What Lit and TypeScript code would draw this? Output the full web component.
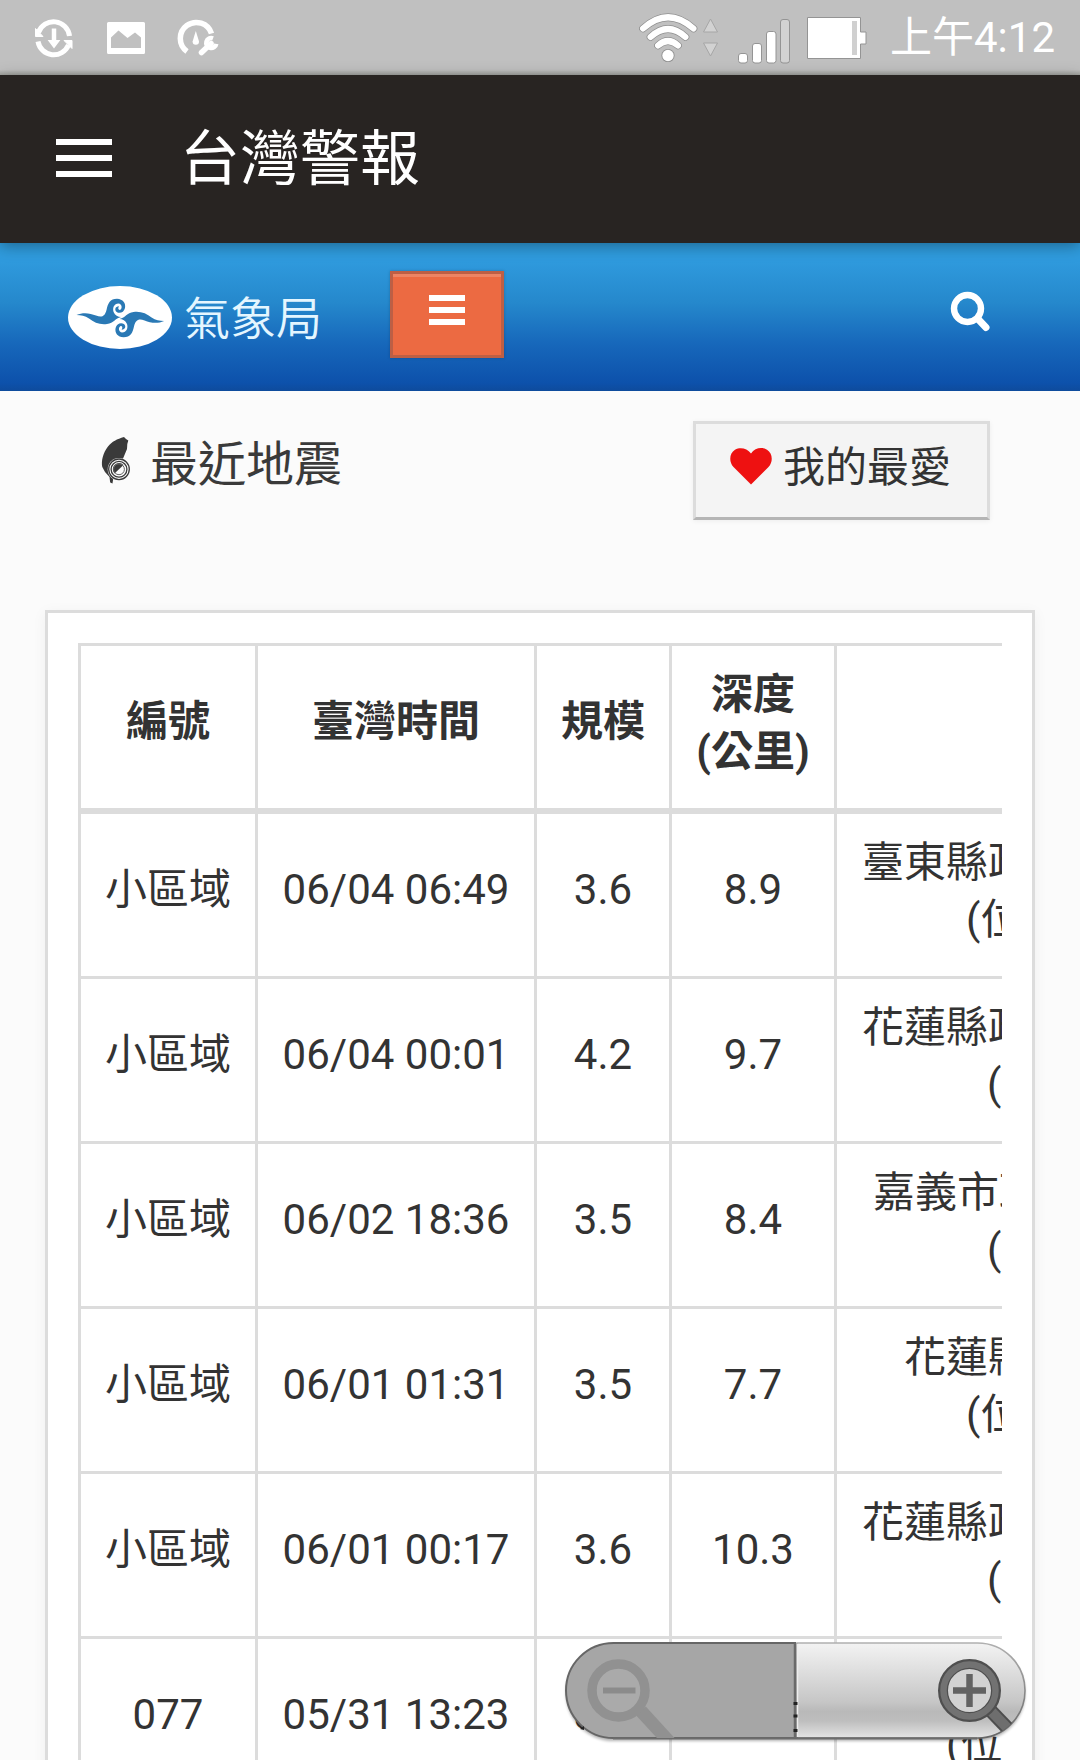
import { LitElement, html, css, svg } from "lit";
import { customElement, property } from "lit/decorators.js";

interface Quake {
  id: string;
  time: string;
  magnitude: string;
  depth: string;
  place: string;
  placeIndent: number;
  note: string;
  noteIndent: number;
}

const QUAKES: Quake[] = [
  { id: "小區域", time: "06/04 06:49", magnitude: "3.6", depth: "8.9", place: "臺東縣政", placeIndent: 25, note: "(位", noteIndent: 129 },
  { id: "小區域", time: "06/04 00:01", magnitude: "4.2", depth: "9.7", place: "花蓮縣政", placeIndent: 25, note: "(", noteIndent: 150 },
  { id: "小區域", time: "06/02 18:36", magnitude: "3.5", depth: "8.4", place: "嘉義市政", placeIndent: 36, note: "(", noteIndent: 150 },
  { id: "小區域", time: "06/01 01:31", magnitude: "3.5", depth: "7.7", place: "花蓮縣", placeIndent: 67, note: "(位", noteIndent: 129 },
  { id: "小區域", time: "06/01 00:17", magnitude: "3.6", depth: "10.3", place: "花蓮縣政", placeIndent: 25, note: "(", noteIndent: 150 },
  { id: "077", time: "05/31 13:23", magnitude: "3.6", depth: "19.3", place: "花蓮縣政", placeIndent: 25, note: "(位", noteIndent: 109 },
];

const fontStack = css`Roboto, "Noto Sans CJK TC", sans-serif`;

@customElement("status-bar")
export class StatusBar extends LitElement {
  static styles = css`
    :host {
      display: flex;
      height: 75px;
      background: linear-gradient(#c0c0c0 70px, #a3a5a0 75px);
      font-family: ${fontStack};
      color: #fff;
    }
    svg { display: block; flex: none; height: 75px; }
    .sync { width: 44px; margin-left: 32px; }
    .photo { width: 44px; margin-left: 28px; }
    .gauge { width: 46px; margin-left: 26px; }
    .signals { width: 236px; margin-left: auto; }
    .clock {
      margin: 8px 25px 0 18px;
      font-size: 42px;
      line-height: 60px;
      white-space: nowrap;
    }
  `;

  render() {
    return html`
      <svg class="sync" viewBox="32 0 44 75" fill="none" stroke="#fff" stroke-width="5">
        <path d="M38.5 32.5A16 16 0 0 1 69.500 36" />
        <path d="M38 41.500A16 16 0 0 0 68.500 45" />
        <path d="M35.500 28.500v8h7.500zM72 48.500v-8h-8z" fill="#fff" stroke-width="1" />
        <path d="M54 28.500V41" stroke-width="4.500" />
        <path d="M47.600 40h12.800L54 48.500z" fill="#fff" stroke="none" />
      </svg>
      <svg class="photo" viewBox="104 0 44 75">
        <path fill="#fff" fill-rule="evenodd" d="M108.500 22h35a1.500 1.500 0 0 1 1.500 1.500v29a1.500 1.500 0 0 1-1.500 1.500h-35a1.500 1.500 0 0 1-1.500-1.500v-29a1.500 1.500 0 0 1 1.500-1.500zM111 48h30V37.500l-6-5-7.500 5.500-9-7.500-7.500 7z" />
      </svg>
      <svg class="gauge" viewBox="174 0 46 75" fill="none" stroke="#fff">
        <path d="M187 51.500A16 16 0 1 1 211.500 33.500" stroke-width="5.500" />
        <path d="M195.800 31l3.200 10.500a3.200 3.200 0 1 1-6.400 0z" fill="#fff" stroke="none" />
        <path d="M201.500 52.500L211 43.500" stroke-width="5.500" stroke-linecap="round" />
        <path d="M213 38.300a5 5 0 1 0 3.200 5.500" stroke-width="4.600" />
      </svg>
      <svg class="signals" viewBox="636 0 236 75" fill="none">
        ${["#8f8f8f", "#fff"].map(
          (color, layer) => svg`
            <g stroke=${color} stroke-width=${layer ? 6 : 7.600} stroke-linecap="round">
              <path d="M643 28.500Q668 6 693.500 28.500" />
              <path d="M650.500 37Q668 21 685.500 37" />
              <path d="M658 45.500Q668 36.500 678 45.500" />
            </g>
            <circle cx="668" cy="55.500" r=${layer ? 5.700 : 6.600} fill=${color} />`
        )}
        <path d="M710.500 19l7 13h-14zM710.500 56l7-13h-14z" fill="#d2d2d2" stroke="#a6a6a6" stroke-width="1" stroke-linejoin="round" />
        <g fill="#fff" stroke="#949494" stroke-width="1">
          <rect x="738.500" y="53.500" width="9" height="9.500" rx="2.500" />
          <rect x="752.500" y="43.500" width="9" height="19.500" rx="2.500" />
          <rect x="766.500" y="31.500" width="9.500" height="31.500" rx="2.500" />
          <rect x="780.500" y="19.500" width="9" height="43.500" rx="2.500" fill="#d2d2d2" />
          <path d="M807.500 17.500h53v14.500h5.500v12h-5.500v14.500h-53z" />
          <path d="M852 21h5v34h-5z" fill="#d0d0d0" stroke="none" />
        </g>
      </svg>
      <span class="clock">上午4:12</span>
    `;
  }
}

@customElement("app-bar")
export class AppBar extends LitElement {
  static styles = css`
    :host {
      display: flex;
      align-items: center;
      height: 168px;
      padding-left: 56px;
      box-sizing: border-box;
      background: #282422;
      font-family: ${fontStack};
      color: #fff;
      box-shadow: 0 3px 14px rgba(0, 0, 0, 0.35);
      position: relative;
      z-index: 1;
    }
    .menu { display: grid; gap: 10px; width: 56px; margin-top: -3px; }
    .menu i { height: 6px; background: #fff; }
    .title { margin-left: 68px; font-size: 60px; line-height: 80px; margin-top: 2px; }
  `;

  render() {
    return html`
      <div class="menu"><i></i><i></i><i></i></div>
      <div class="title">台灣警報</div>
    `;
  }
}

@customElement("site-header")
export class SiteHeader extends LitElement {
  static styles = css`
    :host {
      display: flex;
      height: 148px;
      background: linear-gradient(#2f9ddd 0, #2f9add 18px, #2588cc 60px, #1768bb 100px, #0d51ab 140px, #0e4b9c 148px);
      font-family: ${fontStack};
    }
    .logo { width: 104px; height: 63px; margin: 43px 0 0 68px; flex: none; }
    .name {
      margin: 41px 0 0 12px;
      width: 141px;
      font-size: 46px;
      line-height: 70px;
      font-weight: 350;
      color: #e4f6ff;
      white-space: nowrap;
    }
    .nav {
      display: grid;
      gap: 6px;
      align-content: start;
      justify-content: center;
      grid-template-columns: 36px;
      box-sizing: border-box;
      width: 114px;
      height: 87px;
      margin: 28px 0 0 65px;
      padding-top: 21px;
      border: 3px solid #bd5f45;
      background: #ec6a42;
      box-shadow: inset 0 3px 0 #ee8463, 0 0 3px rgba(0, 0, 0, 0.2);
    }
    .nav i { height: 6px; background: #fff; }
    .search { width: 44px; height: 44px; margin: 46px 86px 0 auto; }
  `;

  render() {
    const wave = "M8.500 29C15 26 22 27 28 29.500C34 32 37 30 38.500 24C40 17 42 12.700 49 12.700C55 13 58 17 57 22C56 26.500 51.500 28 48.700 26C46.300 24 47 20.500 51 20.300C49.500 22.500 50.500 24.300 52.300 23.800C54.500 22.500 54 17.800 50.500 17.500C46 17.500 44.300 22 45.600 26C47 29.500 50 31 53 31C47 32.500 46 37 39 38C32 39 26 36.500 21 32.500C17 29.800 13 29 8.500 29Z";
    return html`
      <svg class="logo" viewBox="0 0 104 63">
        <ellipse cx="52" cy="31.500" rx="52" ry="31.500" fill="#fff" />
        <g fill="#2a79b5">
          <path d=${wave} />
          <path transform="rotate(180 52.300 32)" d=${wave} />
        </g>
      </svg>
      <div class="name">氣象局</div>
      <div class="nav"><i></i><i></i><i></i></div>
      <svg class="search" viewBox="0 0 44 44" fill="none" stroke="#fff">
        <circle cx="17.500" cy="19.500" r="13.500" stroke-width="6.400" />
        <path d="M28 30l8 8.500" stroke-width="7" stroke-linecap="round" />
      </svg>
    `;
  }
}

@customElement("page-heading")
export class PageHeading extends LitElement {
  static styles = css`
    :host {
      display: flex;
      align-items: flex-start;
      height: 219px;
      font-family: ${fontStack};
      color: #333;
    }
    .island { width: 32px; height: 50px; margin: 44px 0 0 100px; flex: none; }
    .title { margin: 38px 0 0 18px; font-size: 48px; line-height: 72px; color: #3a3a3a; }
    .fav {
      display: flex;
      align-items: flex-start;
      box-sizing: border-box;
      width: 297px;
      height: 99px;
      margin: 30px 90px 0 auto;
      border: 3px solid #dcdcdc;
      border-bottom-color: #b5b5b5;
      background: #f4f4f4;
      box-shadow: 0 1px 5px rgba(0, 0, 0, 0.06);
      font-size: 42px;
      line-height: 60px;
      white-space: nowrap;
    }
    .heart { width: 42px; height: 37px; margin: 24px 11px 0 34px; flex: none; }
    .label { margin-top: 14px; }
  `;

  render() {
    return html`
      <svg class="island" viewBox="0 0 32 50">
        <path fill="#3a3a3a" d="M24 2L26 4L28.300 5.500L27.300 9L27 14L22 26L14 38L12.500 48.500L10.200 47.500L9.500 42L5 37L2.300 32C1 26 3 18 8 11.500C12 6.500 17 4 24 2Z" />
        <circle cx="19" cy="34.300" r="11.300" fill="#fbfbfb" />
        <path fill="#3a3a3a" d="M23.500 30A6 6 0 0 0 14.500 38.500Z" />
        <g fill="none">
          <circle cx="19" cy="34.300" r="10.300" stroke="#3a3a3a" stroke-width="1.300" />
          <circle cx="19" cy="34.300" r="7.900" stroke="#3a3a3a" stroke-width="1.300" />
          <circle cx="19" cy="34.300" r="5.400" stroke="#666" stroke-width="1" />
        </g>
      </svg>
      <div class="title">最近地震</div>
      <div class="fav">
        <svg class="heart" viewBox="0 0 42 37">
          <path fill="#ee1111" d="M21 36.500L3.500 19C-1.500 13.500-.5 5 5 1.700C10.500-1.300 17 .3 21 5.500C25-.3 32-1.300 37 1.700C42.500 5 43.500 13.500 38.500 19Z" />
        </svg>
        <span class="label">我的最愛</span>
      </div>
    `;
  }
}

@customElement("quake-table")
export class QuakeTable extends LitElement {
  @property({ attribute: false }) rows: Quake[] = [];

  static styles = css`
    :host {
      display: block;
      width: 990px;
      height: 1300px;
      margin-left: 45px;
      box-sizing: border-box;
      padding: 30px 30px 0;
      border: 3px solid #dcdcdc;
      background: #fff;
      box-shadow: 0 3px 14px rgba(0, 0, 0, 0.05);
      font-family: ${fontStack};
      font-size: 42px;
      line-height: 57.500px;
      color: #333;
    }
    .grid { overflow: hidden; border-top: 3px solid #dcdcdc; }
    .row {
      display: grid;
      grid-template-columns: 177px 279px 135px 165px 400px;
      height: 162px;
      border-bottom: 3px solid #dcdcdc;
    }
    .head { font-weight: 700; border-bottom-width: 6px; }
    .cell {
      display: flex;
      flex-direction: column;
      align-items: center;
      justify-content: center;
      padding-bottom: 11px;
      border-left: 3px solid #dcdcdc;
      white-space: nowrap;
    }
    .pair { padding-bottom: 8px; }
    .place { align-items: flex-start; }
  `;

  render() {
    return html`
      <div class="grid">
        <div class="row head">
          <div class="cell">編號</div>
          <div class="cell">臺灣時間</div>
          <div class="cell">規模</div>
          <div class="cell pair"><span>深度</span><span>(公里)</span></div>
          <div class="cell"></div>
        </div>
        ${this.rows.map(
          (q) => html`
            <div class="row">
              <div class="cell">${q.id}</div>
              <div class="cell">${q.time}</div>
              <div class="cell">${q.magnitude}</div>
              <div class="cell">${q.depth}</div>
              <div class="cell pair place">
                <span style="margin-left:${q.placeIndent}px">${q.place}</span>
                <span style="margin-left:${q.noteIndent}px">${q.note}</span>
              </div>
            </div>
          `
        )}
      </div>
    `;
  }
}

@customElement("zoom-control")
export class ZoomControl extends LitElement {
  static styles = css`
    :host { display: block; width: 470px; height: 108px; }
    svg { display: block; }
  `;

  render() {
    return html`
      <svg width="470" height="108" viewBox="560 1637 470 108" fill="none">
        <defs>
          <linearGradient id="light" x1="0" y1="0" x2="0" y2="1">
            <stop offset="0" stop-color="#f3f3f3" />
            <stop offset=".3" stop-color="#dedede" />
            <stop offset=".62" stop-color="#c6c6c6" />
            <stop offset=".72" stop-color="#b9b9b9" />
            <stop offset=".82" stop-color="#bebebe" />
            <stop offset="1" stop-color="#e4e4e4" />
          </linearGradient>
          <linearGradient id="edge" x1="0" y1="0" x2="0" y2="1">
            <stop offset="0" stop-color="#b0b0b0" />
            <stop offset="1" stop-color="#666" />
          </linearGradient>
          <clipPath id="left"><path d="M796 1643H613.500a47.500 47.500 0 0 0 0 95H796z" /></clipPath>
          <clipPath id="right"><path d="M796 1643h181.500a47.500 47.500 0 0 1 0 95H796z" /></clipPath>
          <filter id="drop" x="-5%" y="-5%" width="110%" height="120%"><feGaussianBlur stdDeviation="1.500" /></filter>
        </defs>
        <rect x="566" y="1645" width="459" height="96" rx="47.500" fill="#000" opacity=".3" filter="url(#drop)" />
        <path d="M795 1643H613.500a47.500 47.500 0 0 0 0 95H795z" fill="#a6a6a6" stroke="#666" stroke-width="2" />
        <path d="M797 1643h180.500a47.500 47.500 0 0 1 0 95H797z" fill="url(#light)" stroke="url(#edge)" stroke-width="1.600" />
        <path d="M613 1738.500h364" stroke="#6c6c6c" stroke-width="2" />
        <path d="M795 1643v96" stroke="#6a6a6a" stroke-width="2.500" />
        <path d="M797.500 1644v93" stroke="#ededed" stroke-width="1.500" />
        <path d="M793.500 1702h4v3h-4zM793.500 1714.500h4v3h-4zM793.500 1729h4v3h-4z" fill="#222" />
        <path d="M580 1729l4-3v4z" fill="#222" />
        <g clip-path="url(#left)">
          <path d="M641 1711L674 1747" stroke="#919191" stroke-width="13" />
          <circle cx="618.500" cy="1690.500" r="26.500" fill="#aaa" stroke="#919191" stroke-width="9.500" />
          <path d="M603 1690.500h32.500" stroke="#8b8b8b" stroke-width="6" />
        </g>
        <g clip-path="url(#right)">
          <path d="M990 1710L1016 1737" stroke="#4d4d4d" stroke-width="14" />
          <path d="M990 1710L1016 1737" stroke="#6e6e6e" stroke-width="10" />
          <circle cx="969.500" cy="1690.500" r="26.500" fill="#d2d2d2" stroke="#4f4f4f" stroke-width="10" />
          <circle cx="969.500" cy="1690.500" r="26" stroke="#727272" stroke-width="6.500" />
          <path d="M953 1690.500h33M969.500 1674v33" stroke="#626262" stroke-width="6.500" />
        </g>
      </svg>
    `;
  }
}

@customElement("app-root")
export class AppRoot extends LitElement {
  static styles = css`
    :host {
      display: block;
      position: relative;
      width: 1080px;
      height: 1760px;
      overflow: hidden;
      background: #fbfbfb;
    }
    .zoom { position: absolute; left: 560px; top: 1637px; }
  `;

  render() {
    return html`
      <status-bar></status-bar>
      <app-bar></app-bar>
      <site-header></site-header>
      <page-heading></page-heading>
      <quake-table .rows=${QUAKES}></quake-table>
      <zoom-control class="zoom"></zoom-control>
    `;
  }
}
